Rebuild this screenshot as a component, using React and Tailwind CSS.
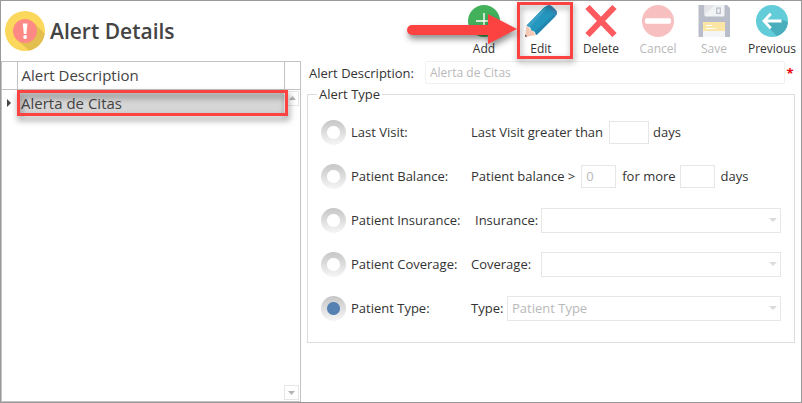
import { useState } from "react";

const alertTypes = [
  { id: "lastVisit", label: "Last Visit:" },
  { id: "balance", label: "Patient Balance:" },
  { id: "insurance", label: "Patient Insurance:" },
  { id: "coverage", label: "Patient Coverage:" },
  { id: "type", label: "Patient Type:" },
];

function AlertIcon() {
  return (
    <svg viewBox="0 0 40 40" className="size-10 shrink-0" aria-hidden="true">
      <circle cx="20" cy="20" r="20" fill="#fbd75b" />
      <path d="M28.5 11.5 L39.7 22.5 A20 20 0 0 1 24 39.6 L11.5 28.5 Z" fill="#e2bf4f" />
      <circle cx="20" cy="20" r="12" fill="#ff8a85" />
      <path d="M17.8 12.5 h4.6 l-1 10.5 h-2.6 z" fill="#fff" />
      <circle cx="20.1" cy="26" r="1.9" fill="#fff" />
    </svg>
  );
}

function AddIcon() {
  return (
    <svg viewBox="0 0 32 32" className="size-8" aria-hidden="true">
      <circle cx="16" cy="16" r="16" fill="#43b05c" />
      <path d="M16 8 V24 M8 16 H24" stroke="#fff" strokeWidth="1.4" />
    </svg>
  );
}

function EditIcon() {
  return (
    <svg viewBox="0 0 32 32" className="size-8" aria-hidden="true">
      <path d="M1.6 20.6 L11.6 30 L1.2 31.8 Q0 32 0 31 Z" fill="#f6c9b5" />
      <path d="M0 29.4 L2.4 31.6 L1 31.8 Q0 32 0 31 Z" fill="#5c4a48" />
      <path d="M1.6 20.6 L19.6 2 Q23.5 -1 26.8 1.2 L31 5.2 Q33 8.4 30.4 11.3 L11.6 30 L9.6 26.8 L6.6 25.4 L5 22.2 Z" fill="#2596be" />
      <path d="M1.6 20.6 L19.6 2 L21.6 4 L5 22.2 Z" fill="#3aa0c6" />
      <path d="M28.4 9.8 L30.4 11.3 L11.6 30 L9.6 26.8 Z" fill="#2187b0" />
      <path d="M21.6 1 Q24.4 -0.4 26.8 1.2 L31 5.2 Q32.6 7.8 31.2 10.2 L28.8 9 Q28 4.6 23 3 Z" fill="#3b84b0" />
    </svg>
  );
}

function DeleteIcon() {
  return (
    <svg viewBox="0 0 32 32" className="size-8" aria-hidden="true">
      <path d="M2.5 2 L29.5 30 M29.5 2 L2.5 30" stroke="#fd5a5f" strokeWidth="6" />
    </svg>
  );
}

function CancelIcon() {
  return (
    <svg viewBox="0 0 32 32" className="size-8" aria-hidden="true">
      <circle cx="16" cy="16" r="16" fill="#f8bfc0" />
      <rect x="3" y="13.3" width="26" height="5.4" rx="1.6" fill="#fff" />
    </svg>
  );
}

function SaveIcon() {
  return (
    <svg viewBox="0 0 32 32" className="size-8" aria-hidden="true">
      <path d="M0.5 0 H29 L32 3 V32 H0.5 Z" fill="#b9bdc9" />
      <path d="M6.5 0 H26.5 V10 Q26.5 11.5 25 11.5 H8 Q6.5 11.5 6.5 10 Z" fill="#f2f3f5" />
      <path d="M6.5 0 H17 L6.5 10 Z" fill="#e3e5e9" />
      <rect x="18.7" y="3" width="3.6" height="5.4" fill="none" stroke="#b9bdc9" strokeWidth="1.2" />
      <rect x="5" y="17" width="22" height="15" fill="#f4f5f7" />
      <rect x="5" y="17" width="22" height="9" fill="#fbe6a6" />
      <path d="M8 20.5 H14 M8 23.5 H16 M17 23.5 H18.5" stroke="#fff" strokeWidth="1" />
    </svg>
  );
}

function PreviousIcon() {
  return (
    <svg viewBox="0 0 32 32" className="size-8" aria-hidden="true">
      <circle cx="16" cy="16" r="16" fill="#62cdd9" />
      <path d="M25.5 14.5 L32 17 A16 16 0 0 1 21 31.2 L7.5 17 Z" fill="#49aebb" />
      <path d="M14.8 8.8 L8 16 L14.8 23.2 M8.5 16 H25.5" fill="none" stroke="#fff" strokeWidth="2.8" />
    </svg>
  );
}

const actions = [
  { label: "Add", Icon: AddIcon, width: "w-[58px]" },
  { label: "Edit", Icon: EditIcon, width: "w-14", highlight: true },
  { label: "Delete", Icon: DeleteIcon, width: "w-16" },
  { label: "Cancel", Icon: CancelIcon, width: "w-[50px]", disabled: true },
  { label: "Save", Icon: SaveIcon, width: "w-[62px]", disabled: true },
  { label: "Previous", Icon: PreviousIcon, width: "w-[54px]" },
];

// Red arrow that points at the Edit button
function Arrow() {
  return (
    <svg viewBox="0 0 110 32" className="absolute top-2 -left-[106px] w-[110px] h-8 overflow-visible drop-shadow-[1px_4px_3px_rgba(0,0,0,0.45)] pointer-events-none" aria-hidden="true">
      <path d="M5 12 H81 V1 L110 16 L81 31 V22 H5 A5 5 0 0 1 5 12 Z" fill="#fd4242" />
    </svg>
  );
}

function Toolbar() {
  return (
    <div className="flex pt-1 pr-0.5">
      {actions.map(({ label, Icon, width, highlight, disabled }) => (
        <div key={label} className={`relative flex justify-center ${width}`}>
          <button
            type="button"
            disabled={disabled}
            className={`flex flex-col items-center text-xs leading-5 ${disabled ? "text-[#b9b9b9]" : "text-[#333]"}`}
          >
            <Icon />
            <span className="mt-0.5">{label}</span>
          </button>
          {highlight && (
            <>
              <span className="absolute -top-[3px] left-1 -right-1 h-[57px] border-3 border-[#fd4242] drop-shadow-[1px_3px_3px_rgba(0,0,0,0.4)] pointer-events-none" />
              <Arrow />
            </>
          )}
        </div>
      ))}
    </div>
  );
}

function ScrollButton({ direction }) {
  return (
    <button type="button" aria-label={`Scroll ${direction}`} className="flex items-center justify-center size-[15px] border border-[#e6e6e6]">
      <svg viewBox="0 0 7 4" className="w-[7px] h-1" aria-hidden="true">
        <path d={direction === "up" ? "M0 4 L3.5 0 L7 4 Z" : "M0 0 L3.5 4 L7 0 Z"} fill="#b5b5b5" />
      </svg>
    </button>
  );
}

function AlertList() {
  return (
    <section className="flex flex-col justify-between w-[300px] shrink-0 border border-[#c3c3c3]">
      <table className="w-full table-fixed text-[15px] leading-5 text-left text-[#444]">
        <thead>
          <tr className="h-[27px] border-b border-[#c3c3c3]">
            <th className="w-[15px] border-r border-[#c3c3c3]"></th>
            <th className="px-1 font-normal border-r border-[#c3c3c3]">Alert Description</th>
            <th className="w-4"></th>
          </tr>
        </thead>
        <tbody>
          <tr className="h-[27px]">
            <td>
              <svg viewBox="0 0 4 8" className="ml-[5px] w-1 h-2" aria-hidden="true">
                <path d="M0 0 L4 4 L0 8 Z" fill="#444" />
              </svg>
            </td>
            <td className="relative px-1 bg-[#d6d6d6]">
              Alerta de Citas
              <span className="absolute inset-y-0 left-0 -right-1 border-3 border-[#fd4242] drop-shadow-[1px_4px_3px_rgba(0,0,0,0.5)] pointer-events-none" />
            </td>
            <td className="align-top">
              <div className="flex justify-end p-px">
                <ScrollButton direction="up" />
              </div>
            </td>
          </tr>
        </tbody>
      </table>
      <div className="flex justify-end p-px">
        <ScrollButton direction="down" />
      </div>
    </section>
  );
}

function DaysInput({ label, width, value }) {
  return (
    <input
      type="text"
      aria-label={label}
      defaultValue={value}
      disabled
      className={`h-[23px] px-1 border border-[#e6e6e6] text-[#b9b9b9] ${width}`}
    />
  );
}

function Dropdown({ id, options = [] }) {
  return (
    <div className="relative flex-1 min-w-0">
      <select id={id} disabled className="block w-full h-[25px] pl-1 pr-4 appearance-none border border-[#e6e6e6] bg-white text-[#b9b9b9] opacity-100">
        {options.map((option) => (
          <option key={option}>{option}</option>
        ))}
      </select>
      <svg viewBox="0 0 8 4" className="absolute right-1 top-2.5 w-2 h-1 pointer-events-none" aria-hidden="true">
        <path d="M0 0 H8 L4 4 Z" fill="#dcdcdc" />
      </svg>
    </div>
  );
}

function AlertForm() {
  const [selected, setSelected] = useState("type");

  const fields = {
    lastVisit: (
      <>
        <span>Last Visit greater than</span>
        <DaysInput label="Last visit days" width="w-10 ml-1.5" />
        <span className="ml-1">days</span>
      </>
    ),
    balance: (
      <>
        <span>Patient balance &gt;</span>
        <DaysInput label="Balance amount" width="w-[35px] ml-1.5" value="0" />
        <span className="ml-1.5">for more</span>
        <DaysInput label="Balance days" width="w-[35px] ml-1" />
        <span className="ml-1.5">days</span>
      </>
    ),
    insurance: (
      <>
        <label htmlFor="insurance" className="w-[70px] pl-1">Insurance:</label>
        <Dropdown id="insurance" />
      </>
    ),
    coverage: (
      <>
        <label htmlFor="coverage" className="w-[70px]">Coverage:</label>
        <Dropdown id="coverage" />
      </>
    ),
    type: (
      <>
        <label htmlFor="patientType" className="w-9">Type:</label>
        <Dropdown id="patientType" options={["Patient Type"]} />
      </>
    ),
  };

  return (
    <form className="flex-1 min-w-0 px-1.5 text-[13px] leading-5 text-[#333]">
      <div className="flex items-center pl-0.5">
        <label htmlFor="description" className="w-[116px] shrink-0">Alert Description:</label>
        <input
          id="description"
          type="text"
          defaultValue="Alerta de Citas"
          disabled
          className="flex-1 min-w-0 h-[23px] px-1 border border-[#f0f0f0] rounded-xs text-xs text-[#b9b9b9]"
        />
        <span className="w-2.5 text-center font-bold text-red-600">*</span>
      </div>

      <fieldset className="px-[13px] pt-1.5 pb-3 border border-[#dcdcdc]">
        <legend className="-ml-1 px-0.5 leading-5">Alert Type</legend>
        {alertTypes.map(({ id, label }) => (
          <div key={id} className="flex items-center h-11">
            <label className="flex items-center gap-[5px] w-[150px] shrink-0">
              <input
                type="radio"
                name="alertType"
                checked={selected === id}
                onChange={() => setSelected(id)}
                className="appearance-none size-[25px] shrink-0 rounded-full bg-[radial-gradient(circle,#fff_6px,transparent_7px),linear-gradient(#c6c6c6,#f6f6f6)] checked:bg-[radial-gradient(circle,#5580b4_6px,transparent_7px),linear-gradient(#c6c6c6,#f6f6f6)]"
              />
              {label}
            </label>
            {fields[id]}
          </div>
        ))}
      </fieldset>
    </form>
  );
}

export default function App() {
  return (
    <div className="flex flex-col min-h-screen border border-[#999] bg-white font-['Open_Sans',sans-serif]">
      <header className="flex justify-between h-[60px]">
        <div className="flex items-center gap-[5px] pl-1">
          <AlertIcon />
          <h1 className="text-[21px] leading-7 font-semibold text-[#444]">Alert Details</h1>
        </div>
        <Toolbar />
      </header>
      <main className="flex flex-1">
        <AlertList />
        <AlertForm />
      </main>
    </div>
  );
}
